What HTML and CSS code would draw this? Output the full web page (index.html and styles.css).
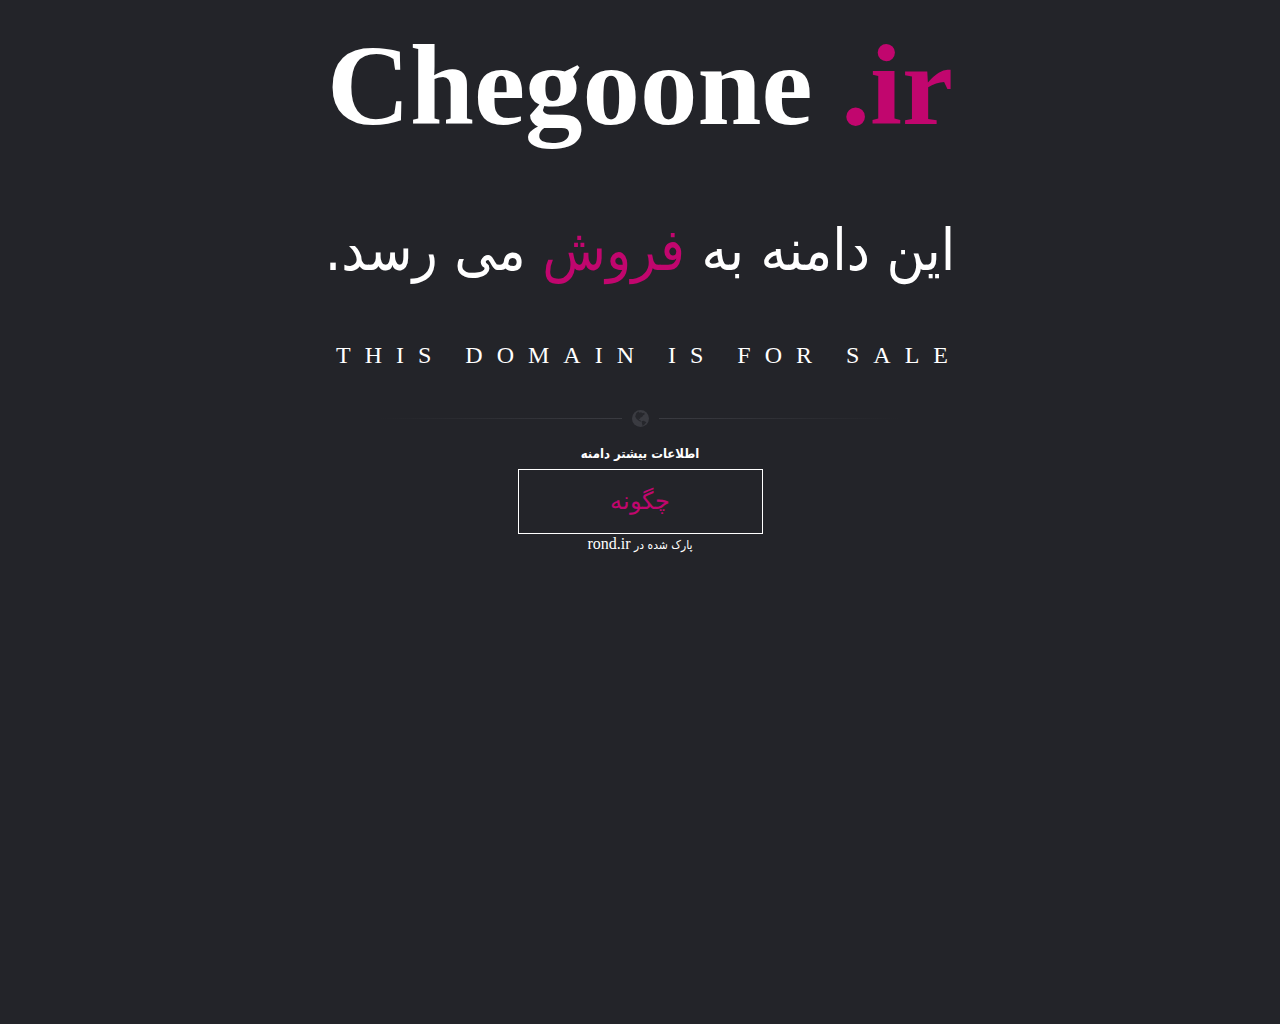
FILE: index.html
```html
<!DOCTYPE html>
<html lang="fa">
<head>
  <meta charset="UTF-8">
  <title>Chegoone.ir</title>
  <meta name="viewport" content="width=device-width">
  <link rel="stylesheet" href="styles.css">
</head>
<body>
<main class="container">
  <h1>Chegoone <span>.ir</span></h1>
  <h2 dir="rtl">این دامنه به <span>فروش</span> می رسد.</h2>
  <p class="sale">THIS DOMAIN IS FOR SALE</p>
  <div class="divider">
    <svg viewBox="0 0 16 16" width="17" height="17" aria-hidden="true">
      <circle cx="8" cy="8" r="8" fill="#3a3b41"/>
      <path d="M4 3L6 1.500 7 2.500 8.500 2 10 3 11.500 2.500 12 4 10.500 5 9.500 6.500 8 7 7.500 8.500 6 8 7 9.500 8.500 10 8 11 6 9.800 4 8 3 6zM9 10.500l2-.5 2.500 1.500-1.500 2-2 1.500-.5-2z" fill="#26272c"/>
    </svg>
  </div>
  <div class="info" dir="rtl">
    <p class="more">اطلاعات بیشتر دامنه</p>
    <div class="box">چگونه</div>
    <p class="parked">پارک شده در <a href="#">rond.ir</a></p>
  </div>
</main>
</body>
</html>
```
FILE: styles.css
```css
body {
  margin: 0;
  background-color: #232429;
  color: #fff;
  font-family: "Liberation Serif", serif;
  text-align: center;
}
.container {
  max-width: 640px;
  margin: 0 auto;
}
h1 {
  margin: 20px 0 0;
  font-size: 115px;
  line-height: 132px;
  white-space: nowrap;
}
h1 span,
h2 span {
  color: #c1066e;
}
h2 {
  margin: 40px 0 0;
  font-family: "DejaVu Sans Condensed", "DejaVu Sans", sans-serif;
  font-size: 58px;
  line-height: 116px;
  font-weight: normal;
  white-space: nowrap;
}
.sale {
  margin: 32px 0 0;
  padding-left: 16px;
  font-size: 24px;
  line-height: 30px;
  letter-spacing: 14px;
  white-space: nowrap;
}
.divider {
  display: flex;
  align-items: center;
  gap: 10px;
  max-width: 520px;
  margin: 40px auto 0;
}
.divider:before,
.divider:after {
  content: "";
  flex: 1;
  height: 1px;
  background: linear-gradient(to right, transparent, #3a3b41);
}
.divider:after {
  background: linear-gradient(to left, transparent, #3a3b41);
}
.info {
  max-width: 245px;
  margin: 12px auto 0;
}
.info p {
  margin: 0;
  font-family: "DejaVu Sans Condensed", "DejaVu Sans", sans-serif;
}
.info .more {
  font-size: 13px;
  font-weight: bold;
  line-height: 30px;
}
.box {
  border: 1px solid #fff;
  color: #c1066e;
  font-size: 24px;
  line-height: 63px;
}
.info .parked {
  font-size: 12px;
  line-height: 20px;
}
.info a {
  color: #fff;
  font-family: "Liberation Serif", serif;
  font-size: 16px;
  text-decoration: none;
}
```
